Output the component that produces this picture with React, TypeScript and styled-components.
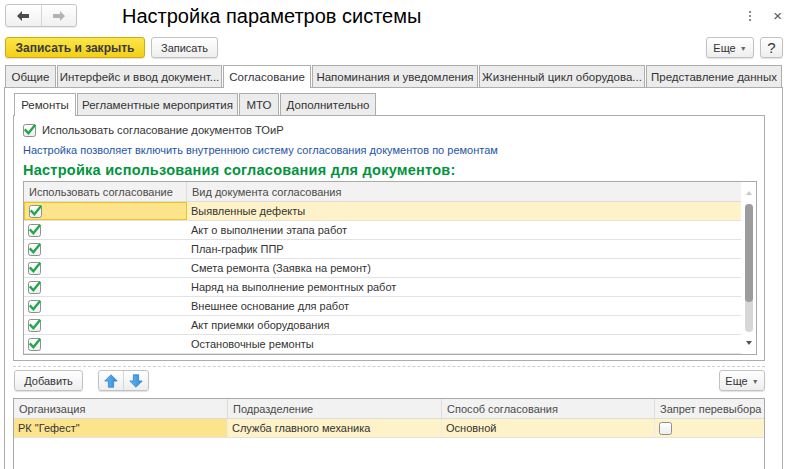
import React from "react";
import styled, { createGlobalStyle, css } from "styled-components";

const GlobalStyle = createGlobalStyle`
  html, body { margin: 0; padding: 0; background: #fff; }
  body { font-family: "Liberation Sans", Arial, sans-serif; font-size: 11px; color: #333; }
  * { box-sizing: border-box; }
`;

const Window = styled.div`
  width: 789px;
  height: 469px;
  overflow: hidden;
  padding: 0 6px 0 4px;
  display: flex;
  flex-direction: column;
`;

const Header = styled.div`
  height: 32px;
  flex-shrink: 0;
  display: flex;
  align-items: flex-start;
  padding-left: 1px;
`;

const NavGroup = styled.div`
  margin-top: 4px;
  width: 72px;
  height: 23px;
  display: flex;
  border: 1px solid #c4c4c4;
  border-radius: 3px;
  background: linear-gradient(#ffffff, #f0f0f0);
  box-shadow: 0 1px 1px rgba(0,0,0,0.08);
`;

const NavBtn = styled.div<{ $sep?: boolean }>`
  flex: 1;
  display: flex;
  align-items: center;
  justify-content: center;
  ${(p) => p.$sep && css`border-left: 1px solid #d6d6d6;`}
`;

const Title = styled.div`
  margin-left: 45px;
  margin-top: 4px;
  font-size: 20px;
  line-height: 24px;
  color: #000;
`;

const HeaderIcons = styled.div`
  margin-left: auto;
  display: flex;
  align-items: center;
  height: 31px;
  gap: 22px;
  padding-right: 1px;
`;

const Kebab = styled.div`
  display: flex;
  flex-direction: column;
  gap: 2px;
  span { width: 2px; height: 2px; background: #8a8a8a; display: block; }
`;

const Close = styled.div`
  font-size: 15px;
  color: #555;
  line-height: 15px;
`;

const CommandBar = styled.div<{ $top: number }>`
  margin-top: ${(p) => p.$top}px;
  height: 21px;
  flex-shrink: 0;
  display: flex;
  align-items: stretch;
  gap: 6px;
  padding-left: 1px;
`;

const Button = styled.div<{ $w: number; $primary?: boolean }>`
  width: ${(p) => p.$w}px;
  display: flex;
  align-items: center;
  justify-content: center;
  gap: 4px;
  border: 1px solid #c2c2c2;
  border-radius: 3px;
  background: linear-gradient(#ffffff, #eeeeee);
  box-shadow: 0 1px 1px rgba(0,0,0,0.12);
  color: #333;
  white-space: nowrap;
  ${(p) =>
    p.$primary &&
    css`
      background: linear-gradient(#fbe649, #f3cf16);
      border-color: #cfaa14;
      font-weight: bold;
      font-size: 12px;
      color: #3b3b3b;
    `}
`;

const Spacer = styled.div`
  flex: 1;
`;

const Caret = styled.span`
  font-size: 7px;
  color: #666;
  margin-top: 1px;
`;

const HelpText = styled.span`
  font-size: 15px;
`;

const TabStrip = styled.div<{ $top: number; $left: number }>`
  margin-top: ${(p) => p.$top}px;
  margin-left: ${(p) => p.$left}px;
  display: flex;
  gap: 1px;
  height: 23px;
  flex-shrink: 0;
  position: relative;
  z-index: 1;
  margin-bottom: -1px;
`;

const Tab = styled.div<{ $w: number; $active?: boolean }>`
  width: ${(p) => p.$w}px;
  height: 22px;
  border: 1px solid #adadad;
  border-bottom: none;
  background: #ececec;
  display: flex;
  align-items: center;
  justify-content: center;
  white-space: nowrap;
  overflow: hidden;
  color: #333;
  font-size: 11.5px;
  ${(p) =>
    p.$active &&
    css`
      background: #fff;
      height: 23px;
      padding-bottom: 1px;
    `}
`;

const TabPanel = styled.div`
  flex: 1;
  min-height: 0;
  border: 1px solid #adadad;
  border-bottom: none;
  padding: 5px 17px 0 8px;
  display: flex;
  flex-direction: column;
`;

const InnerPanel = styled.div`
  flex-shrink: 0;
  border: 1px solid #adadad;
  padding: 6px 7px 5px 9px;
  display: flex;
  flex-direction: column;
`;

const CheckRow = styled.div`
  display: flex;
  align-items: center;
  gap: 6px;
  height: 14px;
  margin-top: 1px;
  font-size: 11.2px;
`;

const Hint = styled.div`
  margin-top: 5px;
  color: #1e54a6;
  line-height: 16px;
`;

const Heading = styled.div`
  margin-top: 3px;
  color: #00953c;
  font-size: 14.5px;
  font-weight: bold;
  line-height: 18px;
  letter-spacing: 0.25px;
`;

const Grid = styled.div`
  margin-top: 2px;
  border: 1px solid #a9a9a9;
  display: flex;
  height: 174px;
  flex-shrink: 0;
`;

const GridBody = styled.div`
  flex: 1;
  display: flex;
  flex-direction: column;
`;

const HeaderRow = styled.div<{ $cols: string }>`
  display: grid;
  grid-template-columns: ${(p) => p.$cols};
  height: 20px;
  flex-shrink: 0;
  background: #f2f2f2;
  border-bottom: 1px solid #dcdcdc;
`;

const HeadCell = styled.div<{ $last?: boolean }>`
  display: flex;
  align-items: center;
  padding-left: 5px;
  color: #4a4a4a;
  white-space: nowrap;
  overflow: hidden;
  border-right: ${(p) => (p.$last ? "none" : "1px solid #dcdcdc")};
`;

const Row = styled.div<{ $cols: string; $selected?: boolean; $h: number }>`
  display: grid;
  grid-template-columns: ${(p) => p.$cols};
  height: ${(p) => p.$h}px;
  flex-shrink: 0;
  border-bottom: 1px solid #e2e2e2;
  background: ${(p) => (p.$selected ? "#fdf2c8" : "#fff")};
`;

const Cell = styled.div<{ $current?: boolean; $focus?: boolean; $sep?: boolean }>`
  display: flex;
  align-items: center;
  padding-left: 4px;
  white-space: nowrap;
  overflow: hidden;
  color: #333;
  ${(p) => p.$sep && css`border-right: 1px solid #ececec;`}
  ${(p) => p.$current && css`background: #fce48d;`}
  ${(p) => p.$focus && css`border: 1px solid #f3c318; padding-left: 4px;`}
`;

const Scroll = styled.div`
  width: 15px;
  display: flex;
  flex-direction: column;
  align-items: center;
  padding-top: 9px;
`;

const ScrollArrow = styled.div<{ $down?: boolean }>`
  width: 0;
  height: 0;
  border-left: 3px solid transparent;
  border-right: 3px solid transparent;
  ${(p) =>
    p.$down
      ? css`border-top: 4px solid #555;`
      : css`border-bottom: 4px solid #c8c8c8;`}
`;

const ScrollTrack = styled.div`
  margin-top: 9px;
  width: 8px;
  height: 128px;
  border-radius: 4px;
  background: #d6d6d6;
  display: flex;
  flex-direction: column;
`;

const ScrollThumb = styled.div`
  height: 98px;
  border-radius: 4px;
  background: #9c9c9c;
`;

const ScrollDown = styled.div`
  margin-top: 9px;
`;

const Divider = styled.div`
  margin-top: 5px;
  flex-shrink: 0;
  border-top: 1px dashed #cfcfcf;
`;

const ArrowGroup = styled.div`
  margin-left: 9px;
  width: 51px;
  display: flex;
  border: 1px solid #c2c2c2;
  border-radius: 3px;
  background: linear-gradient(#ffffff, #eeeeee);
  box-shadow: 0 1px 1px rgba(0,0,0,0.12);
`;

const Grid2 = styled.div`
  margin-top: 7px;
  border: 1px solid #a9a9a9;
  border-bottom: none;
  flex: 1;
  min-height: 0;
  display: flex;
  flex-direction: column;
`;

const BOX = 13;

function CheckBox({ checked }: { checked?: boolean }) {
  return (
    <svg width={BOX} height={BOX} viewBox="0 0 13 13" style={{ flex: "none" }}>
      <defs>
        <linearGradient id="cbg" x1="0" y1="0" x2="0" y2="1">
          <stop offset="0" stopColor="#ffffff" />
          <stop offset="1" stopColor="#eeeeee" />
        </linearGradient>
      </defs>
      <rect x="0.5" y="0.5" width="12" height="12" rx="2" fill="url(#cbg)" stroke="#8f8f8f" />
      {checked && (
        <path d="M2.6 6.2 L5.4 9.2 L11.6 1.6" fill="none" stroke="#1fa84a" strokeWidth="2.4" strokeLinecap="square" />
      )}
    </svg>
  );
}

function NavArrow({ dir, color }: { dir: "left" | "right"; color: string }) {
  const d =
    dir === "left"
      ? "M0 5 L5 0 L5 3 L12 3 L12 7 L5 7 L5 10 Z"
      : "M12 5 L7 0 L7 3 L0 3 L0 7 L7 7 L7 10 Z";
  return (
    <svg width="12" height="10" viewBox="0 0 12 10">
      <path d={d} fill={color} />
    </svg>
  );
}

function BlueArrow({ up }: { up?: boolean }) {
  const d = up
    ? "M7 0.8 L13.2 7 L9.6 7 L9.6 13.2 L4.4 13.2 L4.4 7 L0.8 7 Z"
    : "M7 13.2 L13.2 7 L9.6 7 L9.6 0.8 L4.4 0.8 L4.4 7 L0.8 7 Z";
  return (
    <svg width="14" height="14" viewBox="0 0 14 14">
      <defs>
        <linearGradient id="bl" x1="0" y1="0" x2="1" y2="0">
          <stop offset="0" stopColor="#6cb8f0" />
          <stop offset="1" stopColor="#2d8ad8" />
        </linearGradient>
      </defs>
      <path d={d} fill="url(#bl)" stroke="#2a7fcc" strokeWidth="0.8" strokeLinejoin="round" />
    </svg>
  );
}

const docs = [
  "Выявленные дефекты",
  "Акт о выполнении этапа работ",
  "План-график ППР",
  "Смета ремонта (Заявка на ремонт)",
  "Наряд на выполнение ремонтных работ",
  "Внешнее основание для работ",
  "Акт приемки оборудования",
  "Остановочные ремонты",
];

const topTabs: [string, number][] = [
  ["Общие", 51],
  ["Интерфейс и ввод документ...", 165],
  ["Согласование", 88],
  ["Напоминания и уведомления", 166],
  ["Жизненный цикл оборудова...", 166],
  ["Представление данных", 136],
];

const innerTabs: [string, number][] = [
  ["Ремонты", 62],
  ["Регламентные мероприятия", 161],
  ["МТО", 40],
  ["Дополнительно", 96],
];

const COLS1 = "163px 1fr";
const COLS2 = "214px 214px 213px 1fr";

export default function App() {
  return (
    <>
      <GlobalStyle />
      <Window>
        <Header>
          <NavGroup>
            <NavBtn>
              <NavArrow dir="left" color="#4b4b4b" />
            </NavBtn>
            <NavBtn $sep>
              <NavArrow dir="right" color="#b3b3b3" />
            </NavBtn>
          </NavGroup>
          <Title>Настройка параметров системы</Title>
          <HeaderIcons>
            <Kebab>
              <span />
              <span />
              <span />
            </Kebab>
            <Close>×</Close>
          </HeaderIcons>
        </Header>

        <CommandBar $top={5}>
          <Button $w={140} $primary>
            Записать и закрыть
          </Button>
          <Button $w={67}>Записать</Button>
          <Spacer />
          <Button $w={48}>
            Еще <Caret>▼</Caret>
          </Button>
          <Button $w={23}>
            <HelpText>?</HelpText>
          </Button>
        </CommandBar>

        <TabStrip $top={7} $left={1}>
          {topTabs.map(([t, w]) => (
            <Tab key={t} $w={w} $active={t === "Согласование"}>
              {t}
            </Tab>
          ))}
        </TabStrip>

        <TabPanel>
          <TabStrip $top={0} $left={1}>
            {innerTabs.map(([t, w]) => (
              <Tab key={t} $w={w} $active={t === "Ремонты"}>
                {t}
              </Tab>
            ))}
          </TabStrip>
          <InnerPanel>
            <CheckRow>
              <CheckBox checked />
              <span>Использовать согласование документов ТОиР</span>
            </CheckRow>
            <Hint>Настройка позволяет включить внутреннюю систему согласования документов по ремонтам</Hint>
            <Heading>Настройка использования согласования для документов:</Heading>
            <Grid>
              <GridBody>
                <HeaderRow $cols={COLS1}>
                  <HeadCell>Использовать согласование</HeadCell>
                  <HeadCell $last>Вид документа согласования</HeadCell>
                </HeaderRow>
                {docs.map((d, i) => (
                  <Row key={d} $cols={COLS1} $selected={i === 0} $h={19}>
                    <Cell $current={i === 0} $focus={i === 0}>
                      <CheckBox checked />
                    </Cell>
                    <Cell>{d}</Cell>
                  </Row>
                ))}
              </GridBody>
              <Scroll>
                <ScrollArrow />
                <ScrollTrack>
                  <ScrollThumb />
                </ScrollTrack>
                <ScrollDown>
                  <ScrollArrow $down />
                </ScrollDown>
              </Scroll>
            </Grid>
          </InnerPanel>

          <Divider />
          <CommandBar $top={3}>
            <Button $w={69}>Добавить</Button>
            <ArrowGroup>
              <NavBtn>
                <BlueArrow up />
              </NavBtn>
              <NavBtn $sep>
                <BlueArrow />
              </NavBtn>
            </ArrowGroup>
            <Spacer />
            <Button $w={46}>
              Еще <Caret>▼</Caret>
            </Button>
          </CommandBar>

          <Grid2>
            <HeaderRow $cols={COLS2}>
              <HeadCell>Организация</HeadCell>
              <HeadCell>Подразделение</HeadCell>
              <HeadCell>Способ согласования</HeadCell>
              <HeadCell $last>Запрет перевыбора</HeadCell>
            </HeaderRow>
            <Row $cols={COLS2} $selected $h={19}>
              <Cell $current $sep>РК "Гефест"</Cell>
              <Cell $sep>Служба главного механика</Cell>
              <Cell $sep>Основной</Cell>
              <Cell>
                <CheckBox />
              </Cell>
            </Row>
          </Grid2>
        </TabPanel>
      </Window>
    </>
  );
}
